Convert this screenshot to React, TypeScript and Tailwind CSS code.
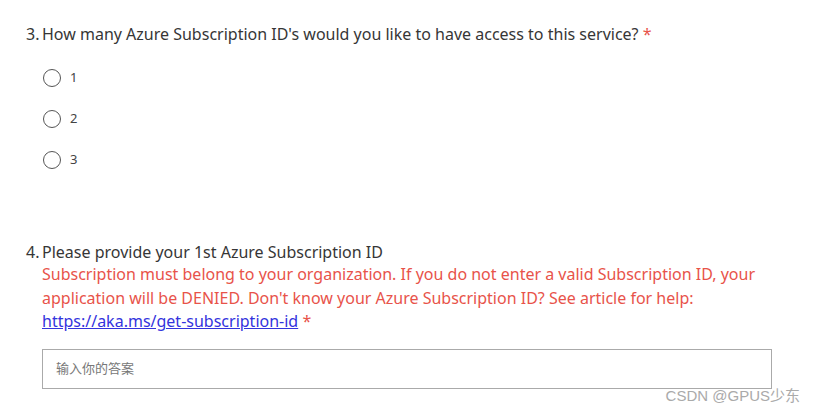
import React from 'react'

const font = { fontFamily: '"Noto Sans", "Noto Sans CJK SC", sans-serif' }

function Radio({ label }: { label: string }) {
  return (
    <label className="flex items-center h-[41px]">
      <span className="w-[18px] h-[18px] rounded-full border border-[#555] bg-white" />
      <span className="ml-[9px] text-[13px] text-[#444]">{label}</span>
    </label>
  )
}

export default function App() {
  return (
    <div className="w-[814px] h-[413px] bg-white relative overflow-hidden text-[#363636]" style={font}>
      <div className="pt-[22px] pl-[26px]">
        <div className="flex text-[16px] leading-[24px]">
          <span className="w-[16px]">3.</span>
          <span>
            How many Azure Subscription ID's would you like to have access to this service?{' '}
            <span className="text-[#e8534a]">*</span>
          </span>
        </div>
        <div className="pl-[17px] mt-[11px]">
          <Radio label="1" />
          <Radio label="2" />
          <Radio label="3" />
        </div>

        <div className="flex text-[16px] leading-[23.5px] mt-[62px]">
          <span className="w-[16px] shrink-0 leading-[21px]">4.</span>
          <div>
            <div className="leading-[21px]">Please provide your 1st Azure Subscription ID</div>
            <div className="text-[#e8534a] pr-[40px]">
              Subscription must belong to your organization. If you do not enter a valid Subscription ID, your
              application will be DENIED. Don't know your Azure Subscription ID? See article for help:{' '}
              <a href="#" className="text-[#3333dd] underline">https://aka.ms/get-subscription-id</a>{' '}
              <span>*</span>
            </div>
          </div>
        </div>

        <div className="ml-[16px] mt-[15px] w-[730px] h-[40px] border border-[#aaa] flex items-center pl-[13px]">
          <span className="text-[13px] text-[#777]">输入你的答案</span>
        </div>
      </div>
      <div className="absolute right-[14px] bottom-[6px] text-[15px] text-[#aaa]" style={{ fontFamily: '"Liberation Sans", "Noto Sans CJK SC", sans-serif' }}>
        CSDN @GPUS少东
      </div>
    </div>
  )
}
